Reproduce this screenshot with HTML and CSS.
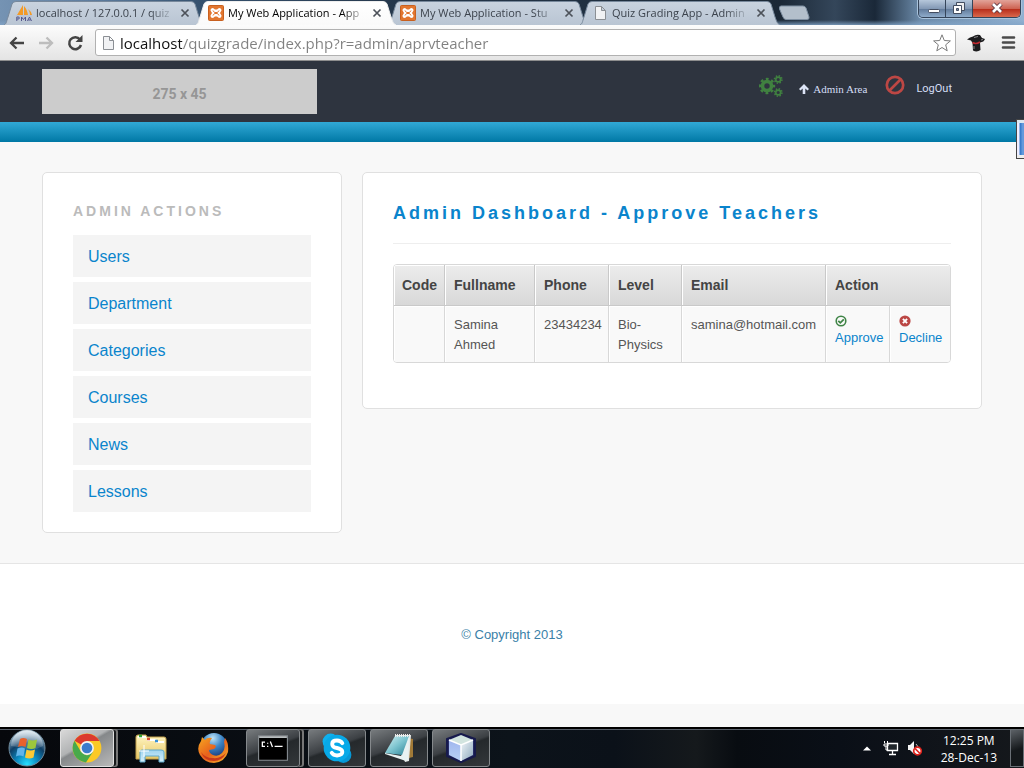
FILE: index.html
```
<!DOCTYPE html>
<html lang="en">
<head>
<meta charset="utf-8">
<meta name="viewport" content="width=device-width, initial-scale=1">
<title>My Web Application - Aprvteacher Admin</title>
<link rel="stylesheet" href="styles.css">
</head>
<body>
<svg class="defs" aria-hidden="true">
  <defs>
    <linearGradient id="gInactive" x1="0" y1="0" x2="0" y2="1"><stop offset="0" stop-color="#c9d3df"/><stop offset="1" stop-color="#b9c5d3"/></linearGradient>
    <linearGradient id="gActive" x1="0" y1="0" x2="0" y2="1"><stop offset="0" stop-color="#fff"/><stop offset="1" stop-color="#fafafa"/></linearGradient>
    <radialGradient id="gOrb" cx=".5" cy=".95" r=".9"><stop offset="0" stop-color="#27e0ff"/><stop offset=".35" stop-color="#0b86bd"/><stop offset=".65" stop-color="#0f3f66"/><stop offset="1" stop-color="#a9c4d6"/></radialGradient>
    <linearGradient id="gGloss" x1="0" y1="0" x2="0" y2="1"><stop offset="0" stop-color="#fff" stop-opacity=".65"/><stop offset="1" stop-color="#fff" stop-opacity=".1"/></linearGradient>
    <linearGradient id="gFolder" x1="0" y1="0" x2="0" y2="1"><stop offset="0" stop-color="#fff6c4"/><stop offset="1" stop-color="#e7c765"/></linearGradient>
    <linearGradient id="gStand" x1="0" y1="0" x2="0" y2="1"><stop offset="0" stop-color="#9fd4ee"/><stop offset="1" stop-color="#d6f0fb"/></linearGradient>
    <radialGradient id="gGlobe" cx=".45" cy=".2" r=".8"><stop offset="0" stop-color="#bfe4f7"/><stop offset=".45" stop-color="#3d86c6"/><stop offset="1" stop-color="#16306f"/></radialGradient>
    <linearGradient id="gFox" x1="0" y1="0" x2="1" y2="1"><stop offset="0" stop-color="#f6a821"/><stop offset=".5" stop-color="#e8601c"/><stop offset="1" stop-color="#f7b52b"/></linearGradient>
    <linearGradient id="gNote" x1="0" y1="0" x2="1" y2="1"><stop offset="0" stop-color="#d9f3f5"/><stop offset=".5" stop-color="#7cc4cf"/><stop offset="1" stop-color="#2a7f93"/></linearGradient>
    <linearGradient id="gCubeL" x1="0" y1="0" x2="0" y2="1"><stop offset="0" stop-color="#9fb5ee"/><stop offset="1" stop-color="#b9d2f5"/></linearGradient>
    <linearGradient id="gCubeR" x1="0" y1="0" x2="1" y2="1"><stop offset="0" stop-color="#f1f7fa"/><stop offset="1" stop-color="#8fa9bd"/></linearGradient>
    <symbol id="shape" viewBox="0 0 200 24" preserveAspectRatio="none"><path d="M-1 24C3 23 2 21 4 16L8 3Q9 .5 12 .5H187Q190 .5 191 3L195 16C197 21 197 23 201 24"/></symbol>
    <symbol id="xampp" viewBox="0 0 16 16"><rect x=".5" y=".5" width="15" height="15" rx="1" fill="#e2762f" stroke="#c8601f"/><path d="M5 3Q2.500 3 2.500 5.500L4 8 2.500 10.500Q2.500 13 5 13L7 11.500H9L11 13Q13.500 13 13.500 10.500L12 8 13.500 5.500Q13.500 3 11 3L9 4.500H7Z" fill="#fff"/><path d="M5 5.500 6.500 7.500h3L11 5.500M5 10.500l1.500-2h3l1.500 2" fill="none" stroke="#e2762f"/></symbol>
    <symbol id="page" viewBox="0 0 16 16"><path d="M3.500 1.500h6l4 4v9h-10zM9.500 1.500v4h4" fill="#f1f2f4" stroke="#8b8f94"/></symbol>
    <symbol id="cross" viewBox="0 0 10 10"><path d="M1.500 1.500l7 7M8.500 1.500l-7 7" stroke="#4d525a" stroke-width="1.700"/></symbol>
  </defs>
</svg>

<header class="window">
  <div class="tabstrip">
    <div class="tabs">
      <div class="tab">
        <svg class="tab-shape"><use href="#shape"/></svg>
        <svg class="fav" viewBox="0 0 16 16"><path d="M7 0 1 10h6zM8 1v9h4Q11 4 8 1ZM12 4q2 3 2 6h2q-1-4-4-6" fill="#f39a26"/><path d="M0 11h16" stroke="#b9bed2"/><path d="M.8 16v-4h2q1 1 0 2h-2M5.500 16v-4l2 2.500 2-2.500v4M11.500 16l2-4 2 4M12.500 15h2" fill="none" stroke="#53568a"/></svg>
        <a class="tab-label" href="#">localhost / 127.0.0.1 / quiz</a>
        <button class="tab-close" aria-label="Close tab"><svg viewBox="0 0 10 10"><use href="#cross"/></svg></button>
      </div>
      <div class="tab active">
        <svg class="tab-shape"><use href="#shape"/></svg>
        <svg class="fav"><use href="#xampp"/></svg>
        <a class="tab-label" href="#">My Web Application - App</a>
        <button class="tab-close" aria-label="Close tab"><svg viewBox="0 0 10 10"><use href="#cross"/></svg></button>
      </div>
      <div class="tab">
        <svg class="tab-shape"><use href="#shape"/></svg>
        <svg class="fav"><use href="#xampp"/></svg>
        <a class="tab-label" href="#">My Web Application - Stu</a>
        <button class="tab-close" aria-label="Close tab"><svg viewBox="0 0 10 10"><use href="#cross"/></svg></button>
      </div>
      <div class="tab">
        <svg class="tab-shape"><use href="#shape"/></svg>
        <svg class="fav"><use href="#page"/></svg>
        <a class="tab-label" href="#">Quiz Grading App - Admin</a>
        <button class="tab-close" aria-label="Close tab"><svg viewBox="0 0 10 10"><use href="#cross"/></svg></button>
      </div>
      <button class="newtab" aria-label="New tab"><svg viewBox="0 0 32 16"><path d="M3 1H25Q27 1 28 3L31 12Q31.500 14.500 29 14.500H8Q6 14.500 5 12L1.500 4Q1 1 3 1Z" fill="#b3bfcb" stroke="#7f90a2"/></svg></button>
    </div>
    <div class="controls">
      <button aria-label="Minimize"><svg viewBox="0 0 28 18"><rect x="9.500" y="9.500" width="11" height="3" rx="1" fill="#fff" stroke="#434d60"/></svg></button>
      <button aria-label="Restore"><svg viewBox="0 0 28 18"><path d="M10.500 2.500h8v8h-8z" fill="#eee" stroke="#434d60"/><path d="M7.500 5.500h8v8h-8z" fill="#fff" stroke="#434d60"/><path d="M10.500 8.500h2v2h-2z" fill="#7c8da5" stroke="#434d60"/></svg></button>
      <button class="close" aria-label="Close"><svg viewBox="0 0 28 18"><path d="M10 4l8 8M18 4l-8 8" stroke="#5a3540" stroke-width="4.500"/><path d="M10 4l8 8M18 4l-8 8" stroke="#fff" stroke-width="2.700"/></svg></button>
    </div>
  </div>
  <div class="toolbar">
    <button class="tool" aria-label="Back"><svg viewBox="0 0 18 18"><path d="M16 9H3M8.500 3.500 3 9l5.500 5.500" fill="none" stroke="#444" stroke-width="2.300"/></svg></button>
    <button class="tool" aria-label="Forward"><svg viewBox="0 0 18 18"><path d="M2 9h13M9.500 3.500 15 9l-5.500 5.500" fill="none" stroke="#bdbdbd" stroke-width="2.300"/></svg></button>
    <button class="tool" aria-label="Reload"><svg viewBox="0 0 18 18"><path d="M14 5.500A6 6 0 1 0 15 11" fill="none" stroke="#444" stroke-width="2.500"/><path d="M16.500 1v7h-7z" fill="#444"/></svg></button>
    <div class="omnibox">
      <svg class="fav"><use href="#page"/></svg>
      <input class="url" type="text" aria-label="Address" value="localhost/quizgrade/index.php?r=admin/aprvteacher">
      <button class="tool" aria-label="Bookmark"><svg viewBox="0 0 18 18"><path d="M9 .8l2.300 5.700 6.100.4-4.700 3.900 1.500 6L9 13.500l-5.200 3.300 1.500-6L.6 6.900l6.100-.4z" fill="#fff" stroke="#7b7b7b"/></svg></button>
    </div>
    <button class="tool" aria-label="Extension"><svg viewBox="0 0 18 18"><path d="M0 5.500Q3 3 6 2.500 9 0 13 1L15 4 18 5Q17 8 13 8.500L13.500 16Q10 18.500 6 16.500L5.500 9 4 6.500Z" fill="#1c1c1e"/><path d="M5.500 8.500Q9 10.500 13 8" fill="none" stroke="#c0282e" stroke-width="1.500"/><path d="M7 3.500 11 2.500M14 6l2-.5M7 12v3" stroke="#8a8a8c"/></svg></button>
    <button class="tool menu" aria-label="Menu"><svg viewBox="0 0 18 18"><path d="M4 3.500h11M4 8.500h11M4 13.500h11" stroke="#4b4b4b" stroke-width="2.600" stroke-linecap="round"/></svg></button>
  </div>
</header>

<div class="page">
  <div class="site-head">
    <a class="logo" href="#">275 x 45</a>
    <nav class="user-nav">
      <svg class="gears" viewBox="0 0 24 22"><g fill="none" stroke="#408140"><circle cx="8" cy="11" r="4.500" stroke-width="3.600"/><circle cx="8" cy="11" r="7" stroke-width="2.400" stroke-dasharray="2.800 2.698" stroke-dashoffset="1.400"/><g id="small"><circle cx="19.200" cy="4.500" r="2.400" stroke-width="1.600"/><circle cx="19.200" cy="4.500" r="3.700" stroke-width="1.600" stroke-dasharray="1.450 1.456"/></g><use href="#small" y="13"/></g></svg>
      <a class="serif" href="#"><svg viewBox="0 0 10 10"><path d="M5 0l5 5-1.500 1.500L6.300 4.600V10H3.700V4.600L1.500 6.500 0 5z" fill="#dde5f7"/></svg>Admin Area</a>
      <svg class="ban" viewBox="0 0 20 20"><path d="M4 16 16 4" stroke="#bd4744" stroke-width="2.700"/><circle cx="10" cy="10" r="8.200" fill="none" stroke="#bd4744" stroke-width="2.700"/></svg>
      <a class="logout" href="#">LogOut</a>
    </nav>
  </div>
  <div class="stripe"><span class="side-handle"></span></div>

  <div class="columns">
    <aside class="card side">
      <h2>ADMIN ACTIONS</h2>
      <ul>
        <li><a href="#">Users</a></li>
        <li><a href="#">Department</a></li>
        <li><a href="#">Categories</a></li>
        <li><a href="#">Courses</a></li>
        <li><a href="#">News</a></li>
        <li><a href="#">Lessons</a></li>
      </ul>
    </aside>
    <main class="card main">
      <h1>Admin Dashboard - Approve Teachers</h1>
      <table>
        <colgroup><col class="c-code"><col class="c-name"><col class="c-phone"><col class="c-level"><col class="c-email"><col class="c-yes"><col class="c-no"></colgroup>
        <thead>
          <tr><th>Code</th><th>Fullname</th><th>Phone</th><th>Level</th><th>Email</th><th colspan="2">Action</th></tr>
        </thead>
        <tbody>
          <tr>
            <td></td><td>Samina Ahmed</td><td>23434234</td><td>Bio-Physics</td><td>samina@hotmail.com</td>
            <td><a class="act" href="#"><svg viewBox="0 0 12 12"><circle cx="6" cy="6" r="4.800" fill="none" stroke="#3f8446" stroke-width="1.600"/><path d="M3.300 5.800 5.300 7.800 8.800 4.300" fill="none" stroke="#3f8446" stroke-width="1.800"/></svg>Approve</a></td>
            <td><a class="act" href="#"><svg viewBox="0 0 12 12"><circle cx="6" cy="6" r="5.600" fill="#bb4745"/><path d="M3.900 3.900l4.200 4.200M8.100 3.900 3.900 8.100" stroke="#fff" stroke-width="1.900"/></svg>Decline</a></td>
          </tr>
        </tbody>
      </table>
    </main>
  </div>
  <footer class="foot">© Copyright 2013</footer>
</div>

<div class="taskbar">
  <button class="start" aria-label="Start"><svg viewBox="0 0 38 38"><circle cx="19" cy="19" r="18" fill="url(#gOrb)" stroke="#6f8b9c"/><path d="M3 17A16 16 0 0 1 35 17Q27 22 19 20T3 17Z" fill="url(#gGloss)"/><path d="M12 10q3-2 7 0l-1.500 8q-4-2-7.500 0z" fill="#e8622c"/><path d="M20.500 10.500q4 2 8.500 0L27.500 19q-4 2-8.500 0z" fill="#9cc73c"/><path d="M9.500 19.500q4-2 7.500 0l-1.500 8q-4-2-7.500 0z" fill="#62b4ea"/><path d="M18.500 20.500q4 2 8.500 0l-1.500 8q-4 2-8.500 0z" fill="#fbc934"/></svg></button>
  <button class="task lit stacked" aria-label="Chrome"><svg viewBox="0 0 30 30"><circle cx="15" cy="15" r="13.500" fill="#fbc926"/><path d="M15 15 3.300 8.300A13.500 13.500 0 0 1 26.800 8.500H15Z" fill="#dc3b2e"/><path d="M3.300 8.300A13.500 13.500 0 0 0 14 28.500L20.800 18.200 15 22 9.300 18.500Z" fill="#48a94b"/><circle cx="15" cy="15" r="6.500" fill="#f3f3f3"/><circle cx="15" cy="15" r="5" fill="#3b7ccc"/></svg></button>
  <button class="task bare" aria-label="Explorer"><svg viewBox="0 0 32 32"><path d="M1 5q0-2 2-2h8l1 2h17q2 0 2 2v20H1z" fill="url(#gFolder)" stroke="#c3a24c"/><path d="M3 5h8M12 8h9M21 10h8" stroke="#fff" stroke-width="2"/><path d="M4 4h3" stroke="#32a434" stroke-width="2.500"/><path d="M12 7h3" stroke="#d84a32" stroke-width="2.500"/><path d="M20 9h3" stroke="#3a92d6" stroke-width="2.500"/><path d="M5 30V20q0-2 2-2h19q3 0 3 2v10h-5v-6H10v6z" fill="url(#gStand)" stroke="#5fa8cb"/><path d="M9 13v12M4 19h10" stroke="#fff"/></svg></button>
  <button class="task bare" aria-label="Firefox"><svg viewBox="0 0 32 32"><circle cx="17" cy="14" r="13" fill="url(#gGlobe)"/><path d="M5 5 4 9Q-1 16 3 23 8 31 17 31 28 30 31 20 32 11 28 6L27 10Q29 17 25 21 21 25 16 23 12 21 12 18L17 17Q20 15 18 13L13 12Q12 9 15 6 10 5 8 8Z" fill="url(#gFox)"/><path d="M4 20q3 9 13 9 8 0 12-8-6 6-13 5-8 0-12-6" fill="#c9391a"/></svg></button>
  <button class="task stacked" aria-label="Command prompt"><svg viewBox="0 0 30 30"><path d="M1.500 3.500h27v23h-27z" fill="#000" stroke="#8a9095"/><path d="M2 4h26v1.500H2z" fill="#d5dadd"/><path d="M7.500 9.500H5v4h2.500M10 10v1M10 13v1M12.500 9l2 5M16.500 13.500H24" fill="none" stroke="#fff" stroke-width="1.200"/></svg></button>
  <button class="task" aria-label="Skype"><svg viewBox="0 0 30 30"><circle cx="9" cy="9" r="7.500" fill="#0db0ee"/><circle cx="21" cy="21.500" r="7.500" fill="#0798d6"/><circle cx="15" cy="15" r="12.500" fill="#08a9e8"/><path d="M20 10.500Q18.500 8 15 8 10.500 8 10.500 11.200T15 15Q20 16 20 18.800T15 22Q11.500 22 10 19.500" fill="none" stroke="#fff" stroke-width="3.600" stroke-linecap="round"/></svg></button>
  <button class="task" aria-label="Notepad"><svg viewBox="0 0 32 32"><path d="M25 6l5 1v18l-4 1z" fill="#a17a37"/><path d="M12 3h16l-2 26-4 1z" fill="#e6e9e7"/><path d="M18 24 2 21v1l21 7 2-1 1-24z" fill="#e9f2f2"/><path d="M12 4h14l-7 19-17-2z" fill="url(#gNote)"/><path d="M12 3.500h16" stroke="#eee" stroke-width="3" stroke-dasharray="1 1"/></svg></button>
  <button class="task" aria-label="NetBeans"><svg viewBox="0 0 32 32"><path d="M16 2 30 7v17L16 30 2 24V7z" fill="#252b66" stroke="#171a4c" stroke-width="2" stroke-linejoin="round"/><path d="M16 3 28 8 16 13 4 8z" fill="#d2e4df"/><path d="M4 8l12 5v16L4 23z" fill="url(#gCubeL)"/><path d="M28 8 16 13v16l12-6z" fill="url(#gCubeR)"/><path d="M4 8l12 5 12-5M16 13v16" fill="none" stroke="#fff" stroke-width="1.500"/></svg></button>
  <div class="tray">
    <button class="tray-icon" aria-label="Show hidden icons"><svg viewBox="0 0 16 16"><path d="M4 10.500 8 6.500l4 4z" fill="#fff"/></svg></button>
    <button class="tray-icon" aria-label="Network"><svg viewBox="0 0 16 16"><path d="M4.500 3.500h10v7h-10zM9.500 11v3M6 14.500h7" fill="#20262b" stroke="#fff" stroke-width="1.300"/><path d="M1.500 1v2M4.500 1v2M1 4h4v2H1zM3 6v4h2" fill="none" stroke="#fff"/></svg></button>
    <button class="tray-icon" aria-label="Volume muted"><svg viewBox="0 0 16 16"><path d="M1 5h2l4-4v13l-4-4H1z" fill="#f3f3f3"/><path d="M9 4q2 2 2 4" fill="none" stroke="#bbb"/><circle cx="10.500" cy="11" r="3.800" fill="#fff" stroke="#e0231c" stroke-width="1.700"/><path d="M8 8.500l5 5" stroke="#e0231c" stroke-width="1.700"/></svg></button>
    <div class="clock"><span>12:25 PM</span><span>28-Dec-13</span></div>
    <button class="desktop" aria-label="Show desktop"></button>
  </div>
</div>
</body>
</html>
```
FILE: styles.css
```
* { box-sizing: border-box; }
body {
  margin: 0;
  min-height: 100vh;
  display: flex;
  flex-direction: column;
  background: #f8f8f8;
  color: #555;
  font: 13px/20px "Liberation Sans", Arial, sans-serif;
}
button { border: 0; padding: 0; margin: 0; background: none; font: inherit; color: inherit; }
a { color: #0a84cc; text-decoration: none; }
svg { display: block; }
.defs { position: absolute; width: 0; height: 0; }

/* browser window */
.tabstrip {
  height: 25px;
  display: flex;
  justify-content: space-between;
  align-items: flex-start;
  background:
    linear-gradient(transparent 20px, rgba(130, 165, 200, .8)),
    linear-gradient(90deg, #7593b3, #5b7a9c 100px, #35516e 200px, #25374b 400px, #1b2836 780px, #34465a 835px, #1a2838 875px, #6c8baa 920px, #91b1d1 100%);
  font: 11px/16px "Open Sans", "Noto Sans", sans-serif;
}
.tabs { flex: 1; display: flex; padding: 1px 0 0 4px; min-width: 0; }
.tab {
  position: relative;
  flex: 0 1 200px;
  min-width: 0;
  height: 24px;
  margin-right: -8px;
  padding: 0 14px 0 12px;
  display: flex;
  align-items: center;
  gap: 4px;
}
.tab > * { position: relative; }
.tab .tab-shape { position: absolute; inset: 0; width: 100%; height: 100%; fill: url(#gInactive); stroke: #77889b; }
.tab.active { z-index: 1; }
.tab.active .tab-shape { fill: url(#gActive); stroke: #eee; }
.fav { width: 16px; height: 16px; flex: none; }
.tab-label {
  flex: 1;
  min-width: 0;
  white-space: nowrap;
  color: #3c434d;
  -webkit-mask-image: linear-gradient(90deg, #000 85%, rgba(0, 0, 0, .2));
  mask-image: linear-gradient(90deg, #000 85%, rgba(0, 0, 0, .2));
}
.active .tab-label { color: #000; }
.tab-close { width: 10px; margin-left: 6px; flex: none; }
.newtab { width: 32px; height: 16px; margin: 4px 0 0 6px; flex: none; }
.controls {
  display: flex;
  height: 18px;
  margin-right: 3px;
  border: 1px solid #35455a;
  border-top: 0;
  border-radius: 0 0 5px 5px;
  overflow: hidden;
  box-shadow: 0 0 0 1px #a9c3dc;
}
.controls button { width: 27px; background: linear-gradient(#b6c7db, #8399b5 50%, #5f7898 51%, #8faccb); border-right: 1px solid #35455a; }
.controls .close { width: 47px; border: 0; background: linear-gradient(#e2a399, #ce6453 50%, #b52a18 51%, #d9684c); }
.controls svg { height: 18px; margin: auto; }
.toolbar {
  height: 36px;
  padding: 0 7px 0 8px;
  display: flex;
  align-items: center;
  gap: 11px;
  background: linear-gradient(#fcfcfc, #e4e4e4);
  border-bottom: 1px solid #8e8e8e;
}
.tool { width: 18px; flex: none; }
.tool svg { width: 18px; height: 18px; }
.menu { margin-left: 3px; }
.omnibox {
  flex: 1;
  height: 27px;
  padding: 0 4px;
  display: flex;
  align-items: center;
  gap: 4px;
  background: #fff;
  border: 1px solid #b1b1b1;
  border-radius: 3px;
}
.url {
  flex: 1;
  min-width: 0;
  border: 0;
  padding: 0;
  outline: 0;
  font: 15px/22px "Open Sans", "Noto Sans", sans-serif;
  background: linear-gradient(90deg, #111 62px, #808080 62px);
  -webkit-background-clip: text;
  background-clip: text;
  color: transparent;
}

/* site */
.page { flex: 1; }
.site-head {
  min-height: 61px;
  padding: 8px 42px;
  display: flex;
  justify-content: space-between;
  align-items: flex-start;
  background: #2e343f;
}
.logo {
  width: 275px;
  height: 45px;
  background: #ccc;
  color: #969696;
  font: bold 14px/50px Roboto, sans-serif;
  text-align: center;
}
.user-nav { display: flex; padding: 6px 30px 0 0; }
.gears { width: 24px; height: 22px; margin-right: 16px; }
.user-nav a { color: #d5def5; font-size: 11px; line-height: 16px; padding-top: 6px; }
.user-nav a.serif { display: flex; align-items: center; gap: 4px; font-family: "Liberation Serif", serif; }
.serif svg { width: 10px; height: 10px; }
.ban { width: 20px; height: 20px; margin: 0 11px 0 18px; }
.user-nav a.logout { font-family: Roboto, sans-serif; }
.stripe { position: relative; height: 20px; background: linear-gradient(#31a9d6, #0078a5); }
.side-handle {
  position: absolute;
  right: 0;
  top: -3px;
  width: 8px;
  height: 40px;
  border: 1px solid #444;
  border-right: 0;
  background: linear-gradient(90deg, #eef 2px, #3a7ccb 3px, #3a7ccb 4px, #6299dc 5px);
  box-shadow: inset 0 3px #dce8f0, inset 0 -3px #eee;
}
.columns {
  display: grid;
  grid-template-columns: minmax(0, 15fr) minmax(0, 31fr);
  gap: 20px;
  align-items: start;
  padding: 30px 42px;
}
.card { background: #fff; border: 1px solid #e0e0e0; border-radius: 5px; }
.side { padding: 28px 30px 20px; }
.side h2 { margin: 0 0 14px; font-size: 14px; line-height: 20px; letter-spacing: 3px; color: #bbb; }
.side ul { list-style: none; margin: 0; padding: 0; display: grid; gap: 5px; }
.side a { display: block; padding: 12px 15px 10px; background: #f4f4f4; font-size: 16px; line-height: 20px; }
.main { padding: 30px 30px 45px; }
.main h1 {
  margin: 0 0 20px;
  padding-bottom: 20px;
  border-bottom: 1px solid #eee;
  font-size: 18px;
  line-height: 20px;
  letter-spacing: 3px;
  color: #0a84cc;
}
table {
  width: 100%;
  table-layout: fixed;
  border: 1px solid #d8d8d8;
  border-radius: 4px;
  border-collapse: separate;
  border-spacing: 0;
  overflow: hidden;
}
th, td { padding: 9px 0 7px 9px; text-align: left; vertical-align: top; border-left: 1px solid #d8d8d8; box-shadow: inset 1px 1px #fff; }
th { padding: 10px 0 10px 9px; font-size: 14px; line-height: 20px; color: #444; background: linear-gradient(#ececec, #d8d8d8); border-bottom: 1px solid #c9c9c9; border-left-color: #c9c9c9; }
td { background: #f9f9f9; }
th:first-child, td:first-child { border-left: 0; padding-left: 8px; }
.c-code { width: 50px; }
.c-name { width: 90px; }
.c-phone { width: 74px; }
.c-level { width: 73px; }
.c-email { width: 144px; }
.c-yes { width: 64px; }
.c-no { width: 61px; }
.act { display: grid; gap: 1px; line-height: 20px; }
.act svg { width: 12px; height: 12px; }
.foot {
  padding: 61px 20px 59px;
  border-top: 1px solid #e5e5e5;
  background: #fff;
  color: #3a7fa8;
  text-align: center;
}

/* taskbar */
.taskbar {
  height: 41px;
  display: flex;
  align-items: flex-end;
  padding: 0 0 1px 8px;
  background: linear-gradient(90deg, #06080c, #0c131a 50%, #0b1119 60%, #15191c 68%, #080c11 72%, #0a0f17 82%, #15181c);
  border-top: 2px solid #000;
  box-shadow: inset 0 1px #59606a;
  color: #fff;
}
.start { width: 38px; height: 38px; margin-right: 14px; }
.task {
  width: 58px;
  height: 38px;
  margin-right: 4px;
  display: grid;
  place-items: center;
  border: 1px solid #85898c;
  border-radius: 3px;
  background: linear-gradient(160deg, #777b7e, #3c4044 45%, #25292c 50%, #33373a);
}
.task svg { width: 32px; height: 32px; }
.lit { background: linear-gradient(150deg, #d9d9d9, #b1b3b4 40%, #85888a 45%, #b9b9b9); border-color: #e0e0e0; }
.bare { border-color: transparent; background: none; }
.stacked { width: 54px; margin-right: 8px; box-shadow: 3px 0 0 -1px #17191b, 4px 0 0 #777; }
.tray { flex: 1; display: flex; justify-content: flex-end; align-items: center; height: 38px; gap: 8px; }
.tray-icon { width: 16px; height: 16px; }
.clock { display: flex; flex-direction: column; text-align: center; margin: 2px 5px 0 10px; font: 12px/17px "Open Sans", "Noto Sans", sans-serif; }
.desktop { width: 14px; height: 38px; border: 1px solid #6a7076; background: linear-gradient(160deg, #5c6166, #14181b 55%); }
```
